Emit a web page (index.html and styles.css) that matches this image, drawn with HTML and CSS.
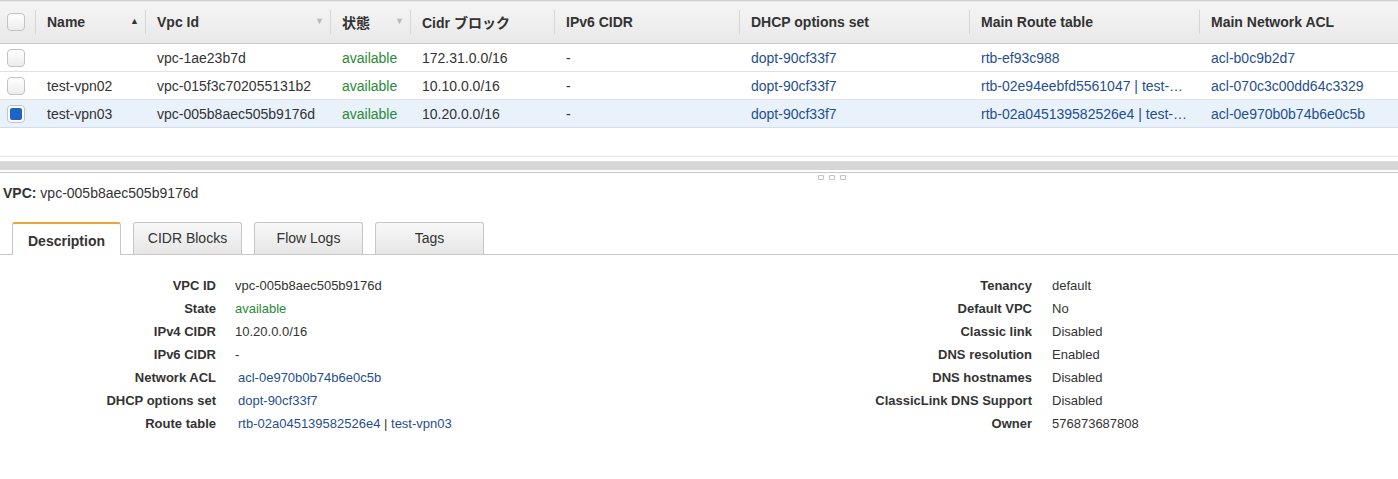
FILE: index.html
```html
<!DOCTYPE html>
<html>
<head>
<meta charset="utf-8">
<link rel="stylesheet" href="styles.css">
</head>
<body>
<div class="grid-wrap">
  <table class="grid">
    <colgroup>
      <col class="c-cb"><col class="c-name"><col class="c-vpc"><col class="c-state"><col class="c-cidr"><col class="c-ipv6"><col class="c-dhcp"><col class="c-rt"><col class="c-acl">
    </colgroup>
    <thead>
      <tr>
        <th class="cb-cell"><span class="cb"></span></th>
        <th><span class="hd">Name</span><span class="sort up">&#9650;</span></th>
        <th><span class="hd">Vpc Id</span><span class="sort">&#9660;</span></th>
        <th><span class="hd">状態</span><span class="sort">&#9660;</span></th>
        <th><span class="hd">Cidr ブロック</span></th>
        <th><span class="hd">IPv6 CIDR</span></th>
        <th><span class="hd">DHCP options set</span></th>
        <th><span class="hd">Main Route table</span></th>
        <th class="last"><span class="hd">Main Network ACL</span></th>
      </tr>
    </thead>
    <tbody>
      <tr>
        <td class="cb-cell"><span class="cb"></span></td>
        <td></td>
        <td>vpc-1ae23b7d</td>
        <td class="ok">available</td>
        <td>172.31.0.0/16</td>
        <td>-</td>
        <td><a>dopt-90cf33f7</a></td>
        <td><a>rtb-ef93c988</a></td>
        <td><a>acl-b0c9b2d7</a></td>
      </tr>
      <tr>
        <td class="cb-cell"><span class="cb"></span></td>
        <td>test-vpn02</td>
        <td>vpc-015f3c702055131b2</td>
        <td class="ok">available</td>
        <td>10.10.0.0/16</td>
        <td>-</td>
        <td><a>dopt-90cf33f7</a></td>
        <td><a>rtb-02e94eebfd5561047 | test-…</a></td>
        <td><a>acl-070c3c00dd64c3329</a></td>
      </tr>
      <tr class="sel">
        <td class="cb-cell"><span class="cb on"></span></td>
        <td>test-vpn03</td>
        <td>vpc-005b8aec505b9176d</td>
        <td class="ok">available</td>
        <td>10.20.0.0/16</td>
        <td>-</td>
        <td><a>dopt-90cf33f7</a></td>
        <td><a>rtb-02a045139582526e4 | test-…</a></td>
        <td><a>acl-0e970b0b74b6e0c5b</a></td>
      </tr>
    </tbody>
  </table>
</div>

<div class="splitter">
  <div class="track"></div>
  <div class="grip"><span></span><span></span><span></span></div>
</div>

<div class="vpc-title"><b>VPC:</b> vpc-005b8aec505b9176d</div>

<div class="tabs">
  <div class="tab active">Description</div>
  <div class="tab">CIDR Blocks</div>
  <div class="tab">Flow Logs</div>
  <div class="tab">Tags</div>
</div>

<div class="details">
  <div class="kv left">
    <div class="k">VPC ID</div><div class="v">vpc-005b8aec505b9176d</div>
    <div class="k">State</div><div class="v ok">available</div>
    <div class="k">IPv4 CIDR</div><div class="v">10.20.0.0/16</div>
    <div class="k">IPv6 CIDR</div><div class="v">-</div>
    <div class="k">Network ACL</div><div class="v"><a>acl-0e970b0b74b6e0c5b</a></div>
    <div class="k">DHCP options set</div><div class="v"><a>dopt-90cf33f7</a></div>
    <div class="k">Route table</div><div class="v"><a>rtb-02a045139582526e4</a> | <a class="nom">test-vpn03</a></div>
  </div>
  <div class="kv right">
    <div class="k">Tenancy</div><div class="v">default</div>
    <div class="k">Default VPC</div><div class="v">No</div>
    <div class="k">Classic link</div><div class="v">Disabled</div>
    <div class="k">DNS resolution</div><div class="v">Enabled</div>
    <div class="k">DNS hostnames</div><div class="v">Disabled</div>
    <div class="k">ClassicLink DNS Support</div><div class="v">Disabled</div>
    <div class="k">Owner</div><div class="v">576873687808</div>
  </div>
</div>
</body>
</html>
```

FILE: styles.css
```css
html, body {
  margin: 0;
  padding: 0;
  background: #fff;
}
body {
  font-family: "Liberation Sans", Arial, "Noto Sans CJK JP", sans-serif;
  font-size: 14px;
  color: #333;
  width: 1398px;
  height: 479px;
  overflow: hidden;
}
a {
  color: #1f4f8f;
  text-decoration: none;
}
.ok {
  color: #2a8a36;
}

/* ---------- grid ---------- */
.grid-wrap {
  height: 156px;
  border-bottom: 1px solid #e6e6e6;
}
.grid {
  border-collapse: collapse;
  table-layout: fixed;
  width: 1398px;
}
.c-cb { width: 36px; }
.c-name { width: 110px; }
.c-vpc { width: 185px; }
.c-state { width: 80px; }
.c-cidr { width: 144px; }
.c-ipv6 { width: 185px; }
.c-dhcp { width: 230px; }
.c-rt { width: 230px; }
.c-acl { width: 198px; }

.grid thead tr {
  height: 43px;
  background: linear-gradient(#f5f5f5, #e9e9e9);
  border-top: 1px solid #d0d0d0;
  border-bottom: 1px solid #c9c9c9;
}
.grid th {
  text-align: left;
  padding: 0 11px;
  font-weight: bold;
  color: #333;
  position: relative;
  white-space: nowrap;
}
.grid th::after {
  content: "";
  position: absolute;
  right: 0;
  top: 9px;
  height: 24px;
  border-right: 1px solid #d6d6d6;
}
.grid th.last::after { display: none; }
.grid th .sort {
  position: absolute;
  right: 7px;
  top: 15px;
  font-size: 9px;
  color: #bbb;
}
.grid th .sort.up {
  color: #333;
  right: 7px;
}
.grid tbody tr {
  height: 28px;
  border-bottom: 1px solid #e1e1e1;
}
.grid tbody tr.sel {
  background: #e9f1fb;
  border-bottom-color: #d2dcea;
}
.grid td {
  padding: 0 11px;
  white-space: nowrap;
  overflow: hidden;
}
.grid .cb-cell {
  padding: 0 0 0 7px;
}
.cb {
  display: block;
  width: 18px;
  height: 18px;
  box-sizing: border-box;
  border: 1px solid #c3c3c3;
  border-radius: 4px;
  background: linear-gradient(#ffffff, #ececec);
}
.cb.on {
  background: #fff;
  position: relative;
}
.cb.on::before {
  content: "";
  position: absolute;
  left: 2px;
  top: 2px;
  width: 12px;
  height: 12px;
  border-radius: 2px;
  background: #1c64c8;
}

/* ---------- splitter ---------- */
.splitter {
  height: 18px;
}
.track {
  margin-top: 4px;
  height: 8px;
  background: #d6d6d6;
  border-top: 1px solid #dedede;
  border-bottom: 2px solid #fff;
  box-shadow: 0 1px 0 #c6c6c6;
}
.grip {
  display: flex;
  gap: 5px;
  margin-top: 3px;
  padding-left: 818px;
}
.grip span {
  width: 4px;
  height: 3px;
  border: 1px solid #c4c4c4;
  border-radius: 1px;
}

/* ---------- title ---------- */
.vpc-title {
  padding: 5px 3px 0;
  height: 22px;
  line-height: 18px;
  color: #333;
}

/* ---------- tabs ---------- */
.tabs {
  display: flex;
  gap: 12px;
  padding: 16px 0 0 12px;
  border-bottom: 1px solid #c8c8c8;
  height: 32px;
}
.tab {
  width: 109px;
  box-sizing: border-box;
  height: 32px;
  border: 1px solid #c6c6c6;
  border-bottom: none;
  border-radius: 3px 3px 0 0;
  background: linear-gradient(#f8f8f8, #e6e6e6);
  text-align: center;
  line-height: 30px;
  color: #333;
}
.tab.active {
  background: #fff;
  border-top: 2px solid #eca43c;
  font-weight: bold;
  line-height: 34px;
  height: 33px;
  margin-bottom: -1px;
}

/* ---------- details ---------- */
.details {
  display: flex;
  padding-top: 19px;
}
.kv {
  display: grid;
  grid-auto-rows: 23px;
  line-height: 23px;
  font-size: 13px;
}
.kv.left {
  width: 700px;
  grid-template-columns: 216px auto;
  column-gap: 19px;
  align-content: start;
}
.kv.right {
  grid-template-columns: 332px auto;
  column-gap: 20px;
  align-content: start;
}
.kv .k {
  text-align: right;
  font-weight: bold;
  color: #333;
}
.kv .v a {
  margin-left: 3px;
}
.kv .v a.nom {
  margin-left: 0;
}
```
